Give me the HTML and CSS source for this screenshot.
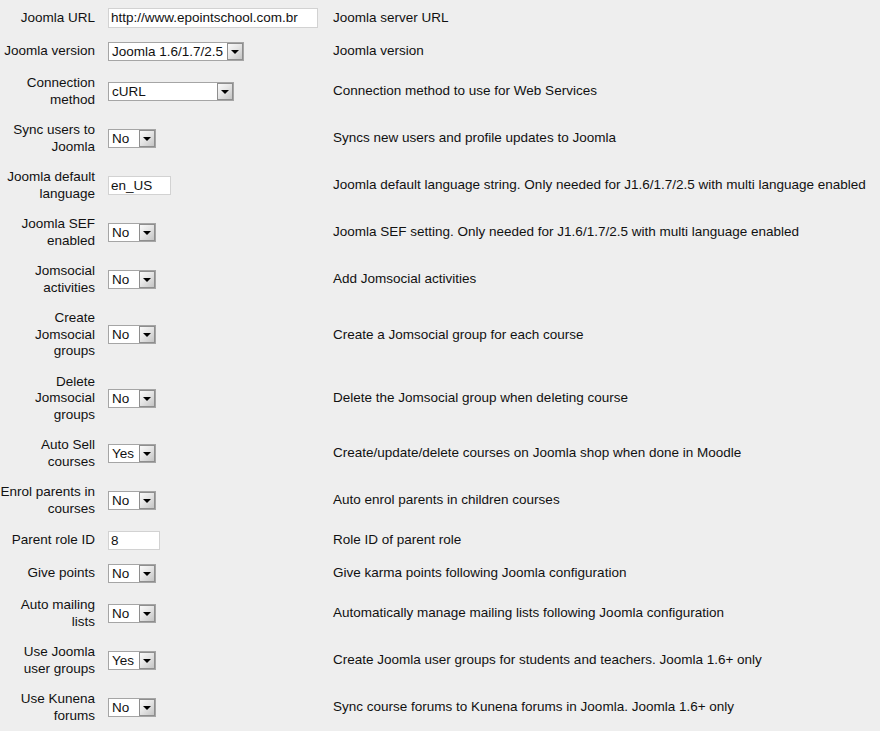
FILE: index.html
```html
<!DOCTYPE html>
<html lang="en">
<head>
<meta charset="utf-8">
<title>Joomla settings</title>
<link rel="stylesheet" href="styles.css">
</head>
<body>
<div class="form">
  <div class="row">
    <div class="label">Joomla URL</div>
    <div class="control"><span class="input w-url">http://www.epointschool.com.br</span></div>
    <div class="desc">Joomla server URL</div>
  </div>
  <div class="row">
    <div class="label">Joomla version</div>
    <div class="control"><span class="select w-ver"><span class="val">Joomla 1.6/1.7/2.5</span><span class="btn"></span></span></div>
    <div class="desc">Joomla version</div>
  </div>
  <div class="row">
    <div class="label">Connection method</div>
    <div class="control"><span class="select w-conn"><span class="val">cURL</span><span class="btn"></span></span></div>
    <div class="desc">Connection method to use for Web Services</div>
  </div>
  <div class="row">
    <div class="label">Sync users to Joomla</div>
    <div class="control"><span class="select w-yn"><span class="val">No</span><span class="btn"></span></span></div>
    <div class="desc">Syncs new users and profile updates to Joomla</div>
  </div>
  <div class="row">
    <div class="label">Joomla default language</div>
    <div class="control"><span class="input w-lang">en_US</span></div>
    <div class="desc">Joomla default language string. Only needed for J1.6/1.7/2.5 with multi language enabled</div>
  </div>
  <div class="row">
    <div class="label">Joomla SEF enabled</div>
    <div class="control"><span class="select w-yn"><span class="val">No</span><span class="btn"></span></span></div>
    <div class="desc">Joomla SEF setting. Only needed for J1.6/1.7/2.5 with multi language enabled</div>
  </div>
  <div class="row">
    <div class="label">Jomsocial activities</div>
    <div class="control"><span class="select w-yn"><span class="val">No</span><span class="btn"></span></span></div>
    <div class="desc">Add Jomsocial activities</div>
  </div>
  <div class="row">
    <div class="label">Create Jomsocial groups</div>
    <div class="control"><span class="select w-yn"><span class="val">No</span><span class="btn"></span></span></div>
    <div class="desc">Create a Jomsocial group for each course</div>
  </div>
  <div class="row">
    <div class="label">Delete Jomsocial groups</div>
    <div class="control"><span class="select w-yn"><span class="val">No</span><span class="btn"></span></span></div>
    <div class="desc">Delete the Jomsocial group when deleting course</div>
  </div>
  <div class="row">
    <div class="label">Auto Sell courses</div>
    <div class="control"><span class="select w-yn"><span class="val">Yes</span><span class="btn"></span></span></div>
    <div class="desc">Create/update/delete courses on Joomla shop when done in Moodle</div>
  </div>
  <div class="row">
    <div class="label">Enrol parents in courses</div>
    <div class="control"><span class="select w-yn"><span class="val">No</span><span class="btn"></span></span></div>
    <div class="desc">Auto enrol parents in children courses</div>
  </div>
  <div class="row">
    <div class="label">Parent role ID</div>
    <div class="control"><span class="input w-role">8</span></div>
    <div class="desc">Role ID of parent role</div>
  </div>
  <div class="row">
    <div class="label">Give points</div>
    <div class="control"><span class="select w-yn"><span class="val">No</span><span class="btn"></span></span></div>
    <div class="desc">Give karma points following Joomla configuration</div>
  </div>
  <div class="row">
    <div class="label">Auto mailing lists</div>
    <div class="control"><span class="select w-yn"><span class="val">No</span><span class="btn"></span></span></div>
    <div class="desc">Automatically manage mailing lists following Joomla configuration</div>
  </div>
  <div class="row">
    <div class="label">Use Joomla user groups</div>
    <div class="control"><span class="select w-yn"><span class="val">Yes</span><span class="btn"></span></span></div>
    <div class="desc">Create Joomla user groups for students and teachers. Joomla 1.6+ only</div>
  </div>
  <div class="row">
    <div class="label">Use Kunena forums</div>
    <div class="control"><span class="select w-yn"><span class="val">No</span><span class="btn"></span></span></div>
    <div class="desc">Sync course forums to Kunena forums in Joomla. Joomla 1.6+ only</div>
  </div>
</div>
</body>
</html>
```

FILE: styles.css
```css
html, body {
  margin: 0;
  padding: 0;
  background: #eeeeee;
}

body {
  font-family: "Liberation Sans", Arial, sans-serif;
  font-size: 13.5px;
  line-height: 16.5px;
  color: #111111;
}

.form {
  display: flex;
  flex-direction: column;
  gap: 14px;
  padding-top: 8px;
}

.row {
  display: grid;
  grid-template-columns: 95px 212px 1fr;
  column-gap: 13px;
  align-items: center;
}

.label {
  text-align: right;
}

.desc {
  white-space: nowrap;
}

.control {
  display: flex;
  align-items: center;
}

.input {
  display: block;
  box-sizing: border-box;
  height: 20px;
  line-height: 18px;
  padding: 0 2px;
  background: #ffffff;
  border: 1px solid #d2d2d2;
  white-space: nowrap;
  overflow: hidden;
}

.w-url { width: 210px; }
.w-lang { width: 63px; height: 19px; line-height: 17px; }
.w-role { width: 52px; height: 19px; line-height: 17px; }

.select {
  display: flex;
  box-sizing: border-box;
  height: 19px;
  background: #ffffff;
  border: 1px solid #a5a5a5;
}

.w-yn { width: 48px; }
.w-ver { width: 136px; }
.w-conn { width: 126px; }

.val {
  flex: 1;
  padding-left: 3px;
  line-height: 17px;
  white-space: nowrap;
  overflow: hidden;
}

.btn {
  position: relative;
  box-sizing: border-box;
  width: 16px;
  height: 17px;
  border: 1px solid #8e8e8e;
  background: linear-gradient(135deg, #fafafa 0%, #e6e6e6 45%, #c4c4c4 100%);
}

.btn::after {
  content: "";
  position: absolute;
  left: 3px;
  top: 6px;
  border-left: 4px solid transparent;
  border-right: 4px solid transparent;
  border-top: 4px solid #000000;
}
```
